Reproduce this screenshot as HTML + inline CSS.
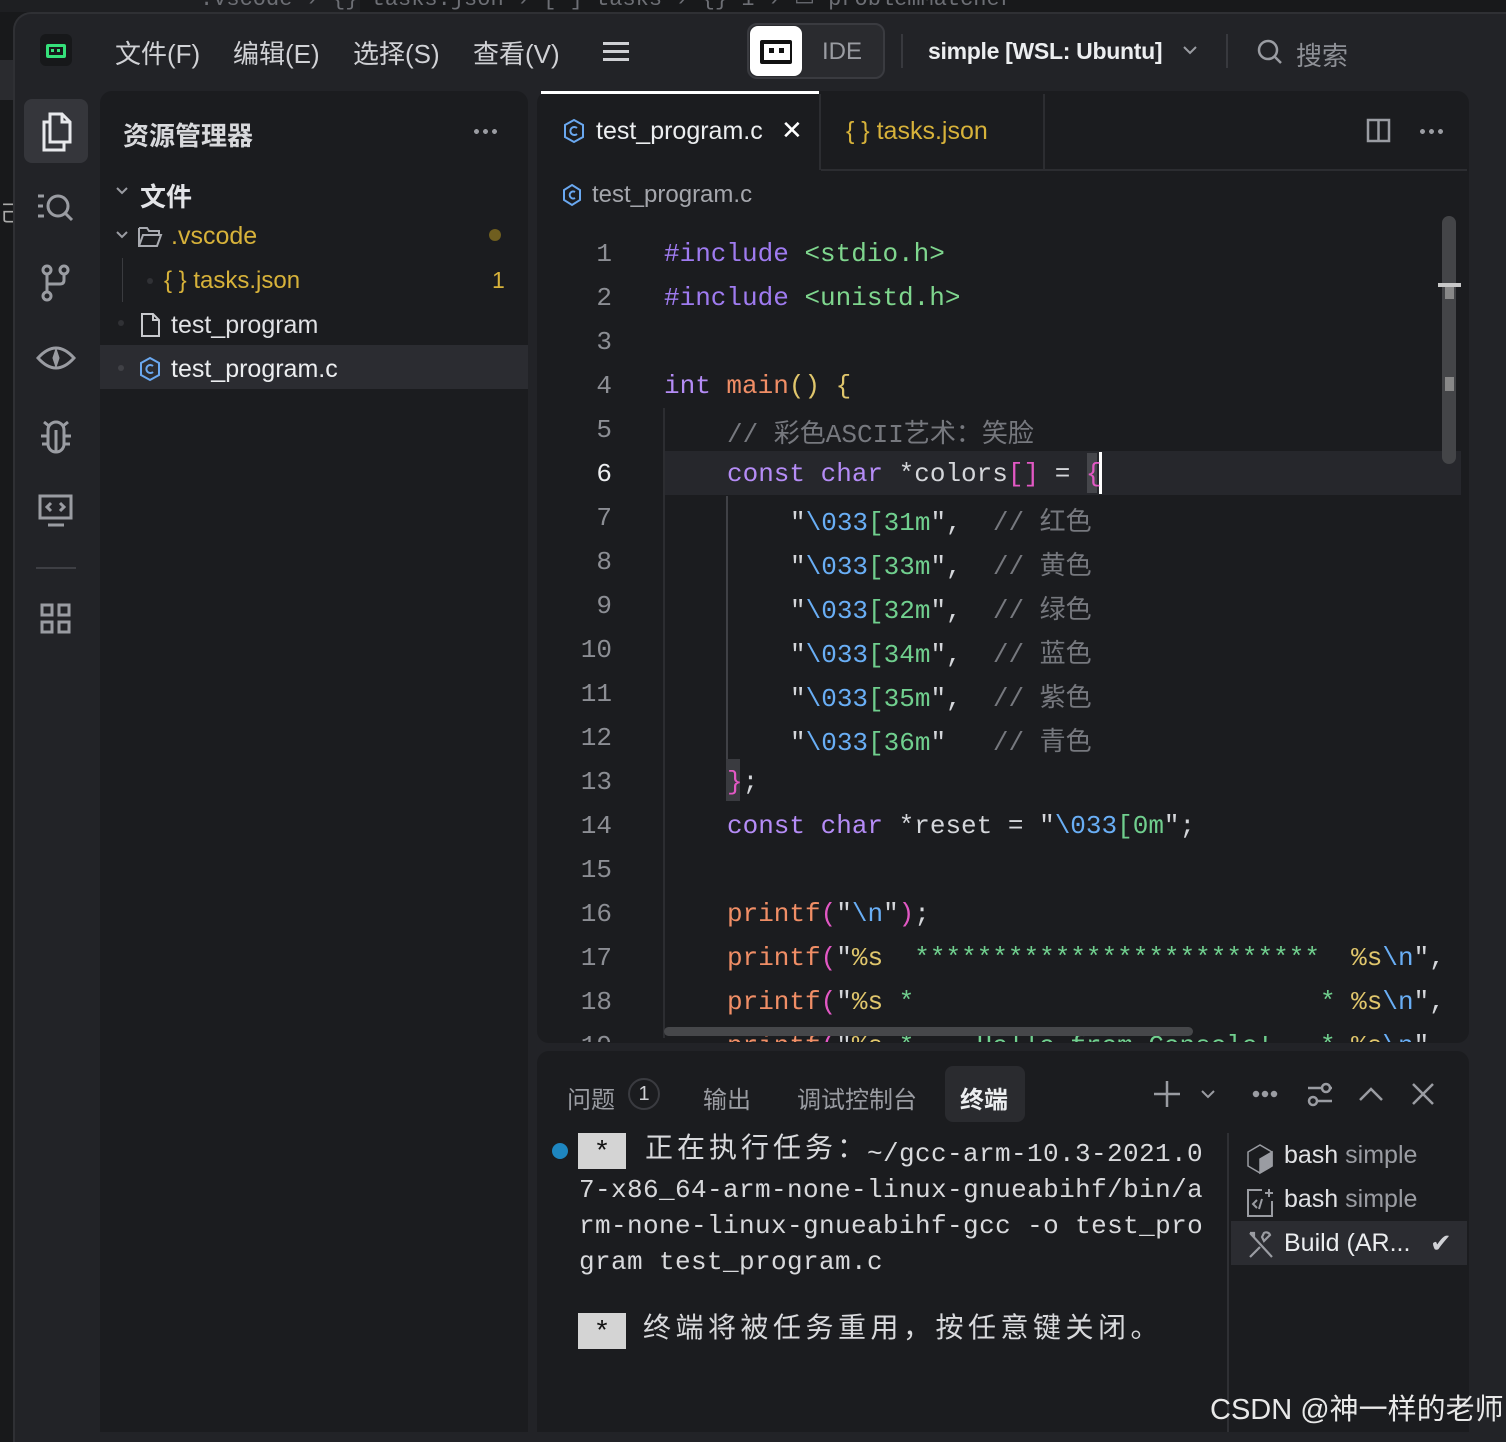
<!DOCTYPE html>
<html><head><meta charset="utf-8"><style>
*{margin:0;padding:0;box-sizing:border-box}
body{width:1506px;height:1432px;overflow:hidden;background:#18191b;font-family:"Liberation Sans","Noto Sans CJK SC",sans-serif;position:relative;color:#d4d4d8}
.a{position:absolute}
.mono{font-family:"Liberation Mono","Noto Sans CJK SC",monospace}
.win{left:13px;top:12px;width:1500px;height:1430px;background:#222327;border-radius:18px 0 0 0;border-top:2px solid #2f3034;border-left:2px solid #2f3034}
.menu{font-size:26px;color:#d0d1d5;top:34px}
.ln{left:560px;width:52px;text-align:right;color:#8c8e94;font-size:26px}
.cd{font-size:26px;white-space:pre;color:#d4d6da}
.kw{color:#b58cf6}.inc{color:#9f7bf0}.hd{color:#7fd68e}.fn{color:#f08e66}.pu{color:#e258c4}.st{color:#d5d7db}.es{color:#69aef5}.gr{color:#70cf8e}.cm{color:#76787e}.ye{color:#e0c66c}
.dots{width:26px;height:5px;background:radial-gradient(circle,#9a9ca2 2.3px,transparent 2.6px) 0 0/9px 5px repeat-x}
</style></head><body>
<div class="a" style="left:0;top:0;width:360px;height:12px;background:#1e1f22"></div>
<div class="a mono" style="left:200px;top:-14px;font-size:22px;color:#6d6f75;white-space:pre">.vscode › {} tasks.json › [ ] tasks › {} 1 › ▭ problemMatcher</div>
<div class="a" style="left:0;top:60px;width:13px;height:40px;background:#2a2b2f"></div>
<div class="a" style="left:0;top:196px;font-size:22px;color:#aaa">己</div>
<div class="a win"></div>
<!-- title bar -->
<div class="a" style="left:40px;top:34px;width:32px;height:32px;background:#17181a;border-radius:6px"></div>
<div class="a" style="left:46px;top:44px;width:20px;height:14px;border:3px solid #35e07a;border-radius:2px"></div>
<div class="a" style="left:51px;top:49px;width:3px;height:3px;background:#35e07a"></div><div class="a" style="left:57px;top:49px;width:3px;height:3px;background:#35e07a"></div>
<div class="a menu" style="left:115px">文件(F)</div>
<div class="a menu" style="left:233px">编辑(E)</div>
<div class="a menu" style="left:353px">选择(S)</div>
<div class="a menu" style="left:473px">查看(V)</div>
<div class="a" style="left:603px;top:42px;width:26px;height:3px;background:#cfd0d4;box-shadow:0 8px 0 #cfd0d4,0 16px 0 #cfd0d4"></div>
<div class="a" style="left:747px;top:23px;width:138px;height:56px;border:2px solid #3a3b40;border-radius:10px;background:#2a2b2f"></div>
<div class="a" style="left:750px;top:26px;width:52px;height:50px;background:#fff;border-radius:8px"></div>
<div class="a" style="left:760px;top:40px;width:32px;height:24px;background:#111;border-radius:2px"></div>
<div class="a" style="left:764px;top:44px;width:26px;height:16px;background:#fff"></div>
<div class="a" style="left:769px;top:48px;width:5px;height:5px;background:#111"></div><div class="a" style="left:779px;top:48px;width:5px;height:5px;background:#111"></div>
<div class="a" style="left:822px;top:38px;font-size:24px;color:#9a9ca2">IDE</div>
<div class="a" style="left:901px;top:34px;width:2px;height:34px;background:#38393e"></div>
<div class="a" style="left:928px;top:38px;font-size:23px;font-weight:bold;color:#eceef0;letter-spacing:-0.3px">simple [WSL: Ubuntu]</div>
<svg class="a" style="left:1182px;top:44px" width="16" height="12" fill="none" stroke="#9a9ca2" stroke-width="2"><path d="M2 3l6 6 6-6"/></svg>
<div class="a" style="left:1226px;top:34px;width:2px;height:34px;background:#38393e"></div>
<svg class="a" style="left:1256px;top:38px" width="28" height="28"><circle cx="12" cy="12" r="9" fill="none" stroke="#9a9ca2" stroke-width="2.5"/><path d="M19 19l6 6" stroke="#9a9ca2" stroke-width="2.5"/></svg>
<div class="a" style="left:1296px;top:36px;font-size:26px;color:#8e9096">搜索</div>
<!-- activity bar -->
<div class="a" style="left:24px;top:99px;width:64px;height:64px;background:#35363b;border-radius:8px"></div>
<svg class="a" style="left:38px;top:110px" width="36" height="44" fill="none" stroke="#e8e9ec" stroke-width="3"><path d="M12 4h12l8 8v20H12z M24 4v8h8"/><path d="M12 12H6v28h20v-8"/></svg>
<svg class="a" style="left:36px;top:190px" width="42" height="36" fill="none" stroke="#9a9ca2" stroke-width="3"><path d="M2 6h6M2 16h5M2 26h6"/><circle cx="22" cy="16" r="10"/><path d="M29 23l7 7"/></svg>
<svg class="a" style="left:40px;top:264px" width="32" height="38" fill="none" stroke="#9a9ca2" stroke-width="3"><circle cx="7" cy="6" r="4"/><circle cx="7" cy="32" r="4"/><circle cx="24" cy="6" r="4"/><path d="M7 10v18M24 10v6q0 4-4 4H7"/></svg>
<svg class="a" style="left:36px;top:342px" width="40" height="32" fill="none" stroke="#9a9ca2" stroke-width="3"><path d="M2 16Q20 -4 38 16Q20 36 2 16z"/><path d="M20 10l2 6-2 6-2-6z" fill="#9a9ca2"/></svg>
<svg class="a" style="left:38px;top:418px" width="36" height="36" fill="none" stroke="#9a9ca2" stroke-width="3"><path d="M10 12a8 8 0 0116 0v14a8 8 0 01-16 0z M18 12v22 M10 18H3M26 18h7M10 26H4M26 26h6M11 8L6 4M25 8l5-4"/></svg>
<svg class="a" style="left:38px;top:494px" width="36" height="34" fill="none" stroke="#9a9ca2" stroke-width="3"><rect x="2" y="2" width="31" height="22"/><path d="M13 9l-4 4 4 4M22 9l4 4-4 4M10 31h16"/></svg>
<div class="a" style="left:36px;top:567px;width:40px;height:2px;background:#3e3f44"></div>
<svg class="a" style="left:40px;top:603px" width="32" height="32" fill="none" stroke="#9a9ca2" stroke-width="3"><rect x="2" y="2" width="10" height="10"/><rect x="19" y="2" width="10" height="10"/><rect x="2" y="19" width="10" height="10"/><rect x="19" y="19" width="10" height="10"/></svg>
<!-- sidebar -->
<div class="a" style="left:100px;top:91px;width:428px;height:1341px;background:#1b1c1f;border-radius:12px 12px 0 0"></div>
<div class="a" style="left:123px;top:116px;font-size:26px;font-weight:bold;color:#d8d9dc">资源管理器</div>
<div class="a dots" style="left:472px;top:129px"></div>
<svg class="a" style="left:115px;top:186px" width="14" height="10" fill="none" stroke="#9a9ca2" stroke-width="2"><path d="M2 2l5 5 5-5"/></svg>
<div class="a" style="left:140px;top:177px;font-size:26px;font-weight:bold;color:#e3e4e7">文件</div>
<svg class="a" style="left:115px;top:230px" width="14" height="10" fill="none" stroke="#9a9ca2" stroke-width="2"><path d="M2 2l5 5 5-5"/></svg>
<svg class="a" style="left:137px;top:225px" width="28" height="24" fill="none" stroke="#a8aab0" stroke-width="2"><path d="M2 3h8l2 3h10v4M2 3v18h18l4-11H6L2 21"/></svg>
<div class="a" style="left:171px;top:222px;font-size:25px;color:#d7b23a">.vscode</div>
<div class="a" style="left:489px;top:229px;width:12px;height:12px;border-radius:6px;background:#6f5e1f"></div>
<div class="a" style="left:122px;top:258px;width:1px;height:44px;background:#3a3b3f"></div>
<div class="a" style="left:147px;top:278px;width:6px;height:6px;border-radius:3px;background:#303135"></div>
<div class="a" style="left:164px;top:267px;font-size:24px;color:#d7b23a">{ } tasks.json</div>
<div class="a" style="left:492px;top:267px;font-size:23px;color:#d7b23a">1</div>
<div class="a" style="left:118px;top:320px;width:6px;height:6px;border-radius:3px;background:#303135"></div>
<svg class="a" style="left:140px;top:312px" width="22" height="26" fill="none" stroke="#c8c9cd" stroke-width="2"><path d="M2 2h11l6 6v16H2z M13 2v6h6"/></svg>
<div class="a" style="left:171px;top:311px;font-size:25px;color:#e0e1e4">test_program</div>
<div class="a" style="left:100px;top:345px;width:428px;height:44px;background:#2b2c31"></div>
<div class="a" style="left:118px;top:365px;width:6px;height:6px;border-radius:3px;background:#404146"></div>
<svg class="a" style="left:138px;top:356px" width="24" height="26" fill="none" stroke="#6aa8f0" stroke-width="2"><path d="M12 2l9 5v12l-9 5-9-5V7z"/><path d="M15 10a4 4 0 100 6" /></svg>
<div class="a" style="left:171px;top:355px;font-size:25px;color:#eceef0">test_program.c</div>
<!-- editor -->
<div class="a" style="left:537px;top:91px;width:932px;height:952px;background:#1b1c1f;border-radius:12px"></div>
<div class="a" style="left:541px;top:91px;width:278px;height:3px;background:#fff"></div>
<div class="a" style="left:819px;top:94px;width:2px;height:76px;background:#2c2d31"></div>
<div class="a" style="left:1043px;top:94px;width:2px;height:76px;background:#2c2d31"></div>
<div class="a" style="left:821px;top:169px;width:646px;height:2px;background:#2c2d31"></div>
<svg class="a" style="left:562px;top:118px" width="24" height="26" fill="none" stroke="#6aa8f0" stroke-width="2"><path d="M12 2l9 5v12l-9 5-9-5V7z"/><path d="M15 10a4 4 0 100 6"/></svg>
<div class="a" style="left:596px;top:117px;font-size:25px;color:#eceef0">test_program.c</div>
<div class="a" style="left:781px;top:115px;font-size:26px;color:#fff">✕</div>
<div class="a" style="left:846px;top:117px;font-size:25px;color:#d7b23a">{ } tasks.json</div>
<svg class="a" style="left:1366px;top:118px" width="26" height="26" fill="none" stroke="#9a9ca2" stroke-width="2.5"><rect x="2" y="2" width="21" height="21"/><path d="M12.5 2v21"/></svg>
<div class="a dots" style="left:1418px;top:129px"></div>
<svg class="a" style="left:561px;top:183px" width="22" height="24" fill="none" stroke="#6aa8f0" stroke-width="2"><path d="M11 2l8 5v10l-8 5-8-5V7z"/><path d="M14 9a3.5 3.5 0 100 6"/></svg>
<div class="a" style="left:592px;top:181px;font-size:24px;color:#a4a6ac">test_program.c</div>
<div class="a" style="left:664px;top:451px;width:797px;height:44px;background:#26272c"></div>
<div class="a" style="left:663px;top:408px;width:2px;height:630px;background:#2c2d31"></div>
<div class="a" style="left:726px;top:496px;width:2px;height:264px;background:#404146"></div>
<div class="a" style="left:1087px;top:453px;width:10px;height:40px;background:#45464b"></div>
<div class="a" style="left:1099px;top:452px;width:3px;height:42px;background:#fff"></div>
<div class="a" style="left:726px;top:759px;width:14px;height:42px;background:#3a3b40"></div>
<div class="a" style="left:1442px;top:216px;width:14px;height:248px;background:#444548;border-radius:7px"></div>
<div class="a" style="left:1438px;top:283px;width:23px;height:4px;background:#c8c8c8"></div>
<div class="a" style="left:1445px;top:287px;width:9px;height:12px;background:#888"></div>
<div class="a" style="left:1445px;top:377px;width:9px;height:14px;background:#888"></div>
<div class="a" style="left:537px;top:230px;width:930px;height:812px;overflow:hidden">
<div style="position:relative;left:-537px;top:-227px">
<div class="a ln mono" style="top:236px">1</div>
<div class="a ln mono" style="top:280px">2</div>
<div class="a ln mono" style="top:324px">3</div>
<div class="a ln mono" style="top:368px">4</div>
<div class="a ln mono" style="top:412px">5</div>
<div class="a ln mono" style="top:456px;color:#eceef0">6</div>
<div class="a ln mono" style="top:500px">7</div>
<div class="a ln mono" style="top:544px">8</div>
<div class="a ln mono" style="top:588px">9</div>
<div class="a ln mono" style="top:632px">10</div>
<div class="a ln mono" style="top:676px">11</div>
<div class="a ln mono" style="top:720px">12</div>
<div class="a ln mono" style="top:764px">13</div>
<div class="a ln mono" style="top:808px">14</div>
<div class="a ln mono" style="top:852px">15</div>
<div class="a ln mono" style="top:896px">16</div>
<div class="a ln mono" style="top:940px">17</div>
<div class="a ln mono" style="top:984px">18</div>
<div class="a ln mono" style="top:1028px">19</div>
<div class="a cd mono" style="left:664px;top:236px"><span class="inc">#include</span> <span class="hd">&lt;stdio.h&gt;</span></div>
<div class="a cd mono" style="left:664px;top:280px"><span class="inc">#include</span> <span class="hd">&lt;unistd.h&gt;</span></div>
<div class="a cd mono" style="left:664px;top:368px"><span class="kw">int</span> <span class="fn">main</span><span class="ye">()</span> <span class="ye">{</span></div>
<div class="a cd mono cm" style="left:727px;top:410px">// 彩色ASCII艺术：笑脸</div>
<div class="a cd mono" style="left:727px;top:456px"><span class="kw">const</span> <span class="kw">char</span> *colors<span class="pu">[]</span> = <span class="pu">{</span></div>
<div class="a cd mono" style="left:790px;top:498px">"<span class="es">\033</span><span class="gr">[31m</span>",  <span class="cm">// 红色</span></div>
<div class="a cd mono" style="left:790px;top:542px">"<span class="es">\033</span><span class="gr">[33m</span>",  <span class="cm">// 黄色</span></div>
<div class="a cd mono" style="left:790px;top:586px">"<span class="es">\033</span><span class="gr">[32m</span>",  <span class="cm">// 绿色</span></div>
<div class="a cd mono" style="left:790px;top:630px">"<span class="es">\033</span><span class="gr">[34m</span>",  <span class="cm">// 蓝色</span></div>
<div class="a cd mono" style="left:790px;top:674px">"<span class="es">\033</span><span class="gr">[35m</span>",  <span class="cm">// 紫色</span></div>
<div class="a cd mono" style="left:790px;top:718px">"<span class="es">\033</span><span class="gr">[36m</span>"   <span class="cm">// 青色</span></div>
<div class="a cd mono" style="left:727px;top:764px"><span class="pu">}</span>;</div>
<div class="a cd mono" style="left:727px;top:808px"><span class="kw">const</span> <span class="kw">char</span> *reset = "<span class="es">\033</span><span class="gr">[0m</span>";</div>
<div class="a cd mono" style="left:727px;top:896px"><span class="fn">printf</span><span class="pu">(</span>"<span class="es">\n</span>"<span class="pu">)</span>;</div>
<div class="a cd mono" style="left:727px;top:940px"><span class="fn">printf</span><span class="pu">(</span>"<span class="ye">%s</span>  <span class="gr">**************************</span>  <span class="ye">%s</span><span class="es">\n</span>",</div>
<div class="a cd mono" style="left:727px;top:984px"><span class="fn">printf</span><span class="pu">(</span>"<span class="ye">%s</span> <span class="gr">*</span>                          <span class="gr">*</span> <span class="ye">%s</span><span class="es">\n</span>",</div>
<div class="a cd mono" style="left:727px;top:1028px"><span class="fn">printf</span><span class="pu">(</span>"<span class="ye">%s</span> <span class="gr">*    Hello from Console!   *</span> <span class="ye">%s</span><span class="es">\n</span>",</div>
</div></div>
<div class="a" style="left:664px;top:1027px;width:529px;height:9px;background:#46474a;border-radius:5px"></div>
<!-- panel -->
<div class="a" style="left:537px;top:1051px;width:932px;height:381px;background:#1b1c1f;border-radius:12px 12px 0 0"></div>
<div class="a" style="left:567px;top:1080px;font-size:24px;color:#9a9ca2">问题</div>
<div class="a" style="left:628px;top:1078px;width:32px;height:32px;border:2px solid #3a3b40;border-radius:16px;font-size:20px;color:#d0d1d5;text-align:center;line-height:28px">1</div>
<div class="a" style="left:703px;top:1080px;font-size:24px;color:#9a9ca2">输出</div>
<div class="a" style="left:797px;top:1080px;font-size:24px;color:#9a9ca2">调试控制台</div>
<div class="a" style="left:945px;top:1066px;width:80px;height:56px;background:#2a2b2f;border-radius:8px"></div>
<div class="a" style="left:960px;top:1080px;font-size:24px;font-weight:bold;color:#eceef0">终端</div>
<svg class="a" style="left:1150px;top:1076px" width="290" height="36" fill="none" stroke="#9a9ca2" stroke-width="2.5"><path d="M17 5v26M4 18h26"/><path d="M52 15l6 6 6-6" stroke-width="2"/><circle cx="106" cy="18" r="2" fill="#9a9ca2"/><circle cx="115" cy="18" r="2" fill="#9a9ca2"/><circle cx="124" cy="18" r="2" fill="#9a9ca2"/><path d="M158 12h24M158 25h24"/><circle cx="176" cy="12" r="4" fill="#1b1c1f"/><circle cx="163" cy="25" r="4" fill="#1b1c1f"/><path d="M210 24l11-11 11 11"/><path d="M263 8l20 20M283 8l-20 20"/></svg>
<div class="a" style="left:552px;top:1143px;width:16px;height:16px;border-radius:8px;background:#1e86c0"></div>
<div class="a mono" style="left:578px;top:1133px;width:48px;height:36px;background:#d4d4d4;color:#111;font-size:28px;text-align:center;line-height:42px">*</div>
<div class="a mono" style="left:645px;top:1133px;font-size:28px;line-height:36px;color:#d8d9dc;letter-spacing:4px">正在执行任务：</div>
<div class="a mono" style="left:867px;top:1136px;font-size:26px;line-height:36px;color:#d8d9dc;white-space:pre;letter-spacing:0.4px">~/gcc-arm-10.3-2021.0</div>
<div class="a mono" style="left:579px;top:1172px;font-size:26px;line-height:36px;color:#d8d9dc;white-space:pre;letter-spacing:0.4px">7-x86_64-arm-none-linux-gnueabihf/bin/a
rm-none-linux-gnueabihf-gcc -o test_pro
gram test_program.c</div>
<div class="a mono" style="left:578px;top:1313px;width:48px;height:36px;background:#d4d4d4;color:#111;font-size:28px;text-align:center;line-height:42px">*</div>
<div class="a mono" style="left:643px;top:1313px;font-size:28px;line-height:36px;color:#d8d9dc;letter-spacing:4.5px">终端将被任务重用，按任意键关闭。</div>
<div class="a" style="left:1227px;top:1133px;width:2px;height:299px;background:#2f3034"></div>
<svg class="a" style="left:1246px;top:1143px" width="28" height="32" fill="none" stroke="#9a9ca2" stroke-width="1.5"><path d="M14 2l12 7v14l-12 7-12-7V9z"/><path d="M14 16l12-7v14l-12 7z" fill="#9a9ca2"/></svg>
<div class="a" style="left:1284px;top:1141px;font-size:25px;color:#e0e1e4">bash <span style="color:#9a9ca2">simple</span></div>
<svg class="a" style="left:1246px;top:1187px" width="30" height="32" fill="none" stroke="#9a9ca2" stroke-width="2"><path d="M16 3H2v26h24V14"/><path d="M11 13l-4 4 4 4M16 12l-3 10"/><path d="M23 2v8M19 6h8"/></svg>
<div class="a" style="left:1284px;top:1185px;font-size:25px;color:#e0e1e4">bash <span style="color:#9a9ca2">simple</span></div>
<div class="a" style="left:1231px;top:1221px;width:236px;height:44px;background:#2b2c31"></div>
<svg class="a" style="left:1246px;top:1229px" width="30" height="32" fill="none" stroke="#9a9ca2" stroke-width="2.2"><path d="M4 4l22 24M4 28l10-10M18 12l6-6a4 4 0 00-6-2l-2 4zM4 4l4 0 0 4"/></svg>
<div class="a" style="left:1284px;top:1229px;font-size:25px;color:#eceef0">Build (AR...</div>
<div class="a" style="left:1430px;top:1228px;font-size:26px;color:#d0d1d5">✔</div>
<div class="a" style="left:1210px;top:1386px;font-size:29px;color:#e8e8e8">CSDN @神一样的老师</div>
</body></html>
